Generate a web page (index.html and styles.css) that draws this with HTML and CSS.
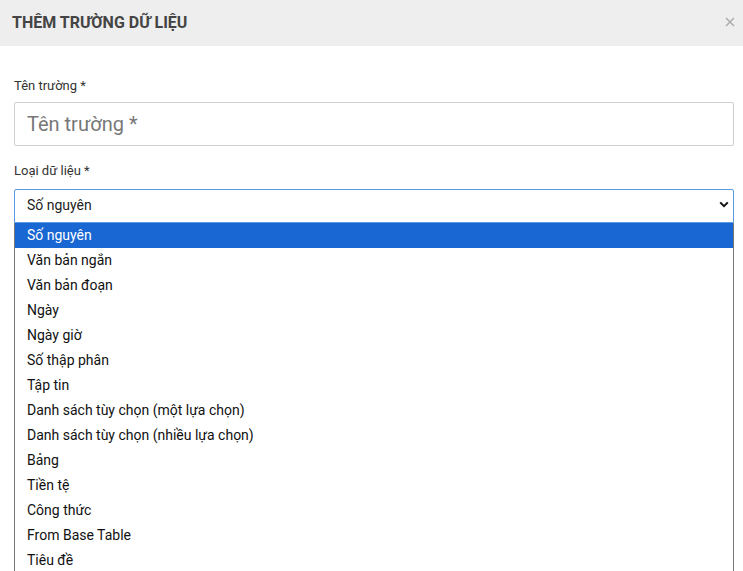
FILE: index.html
```html
<!DOCTYPE html>
<html>
<head>
<meta charset="utf-8">
<link rel="stylesheet" href="styles.css">
</head>
<body>
<div class="modal">
  <div class="modal-header">
    <div class="modal-title">THÊM TRƯỜNG DỮ LIỆU</div>
    <div class="close">
      <svg width="10" height="10" viewBox="0 0 10 10"><path d="M1 1 L9 9 M9 1 L1 9" stroke="#a9a9a9" stroke-width="1.4" fill="none"/></svg>
    </div>
  </div>
  <div class="modal-body">
    <div class="label">Tên trường *</div>
    <div class="text-input">Tên trường *</div>
    <div class="label label-2">Loại dữ liệu *</div>
    <div class="select">
      <span>Số nguyên</span>
      <svg width="10" height="7" viewBox="0 0 10 7"><path d="M1.2 1.4 L5 5.2 L8.8 1.4" stroke="#111" stroke-width="2" fill="none"/></svg>
    </div>
    <div class="options">
      <div class="option selected">Số nguyên</div>
      <div class="option">Văn bản ngắn</div>
      <div class="option">Văn bản đoạn</div>
      <div class="option">Ngày</div>
      <div class="option">Ngày giờ</div>
      <div class="option">Số thập phân</div>
      <div class="option">Tập tin</div>
      <div class="option">Danh sách tùy chọn (một lựa chọn)</div>
      <div class="option">Danh sách tùy chọn (nhiều lựa chọn)</div>
      <div class="option">Bảng</div>
      <div class="option">Tiền tệ</div>
      <div class="option">Công thức</div>
      <div class="option">From Base Table</div>
      <div class="option">Tiêu đề</div>
    </div>
  </div>
</div>
</body>
</html>
```
FILE: styles.css
```css
html, body {
  margin: 0;
  padding: 0;
  background: #fff;
  font-family: Roboto, "Liberation Sans", sans-serif;
  overflow: hidden;
}
.modal {
  width: 743px;
  height: 571px;
  overflow: hidden;
}
.modal-header {
  height: 46px;
  background: #eeeeee;
  display: flex;
  align-items: center;
  justify-content: space-between;
  padding: 0 8px 0 12px;
  box-sizing: border-box;
}
.modal-title {
  font-size: 16px;
  font-weight: 700;
  color: #444;
  letter-spacing: 0;
  margin-top: -2px;
}
.close {
  display: flex;
  margin-top: -3px;
}
.modal-body {
  padding: 32px 9px 0 14px;
}
.label {
  font-size: 13px;
  color: #333;
  line-height: 16px;
  height: 16px;
}
.label-2 {
  margin-top: 17px;
}
.text-input {
  margin-top: 8px;
  height: 44px;
  box-sizing: border-box;
  border: 1px solid #cfcfcf;
  border-radius: 2px;
  padding: 0 12px;
  display: flex;
  align-items: center;
  font-size: 20px;
  color: #777;
}
.select {
  margin-top: 10px;
  height: 34px;
  box-sizing: border-box;
  border: 1px solid #5b9be6;
  border-radius: 2px 2px 0 0;
  padding: 0 4px 3px 12px;
  display: flex;
  align-items: center;
  justify-content: space-between;
  font-size: 14px;
  color: #222;
}
.options {
  border-left: 1px solid #767676;
  border-right: 1px solid #767676;
  box-sizing: border-box;
}
.option {
  height: 25px;
  line-height: 25px;
  font-size: 14px;
  color: #111;
  padding-left: 12px;
}
.option.selected {
  background: #1967d2;
  color: #fff;
}
```
